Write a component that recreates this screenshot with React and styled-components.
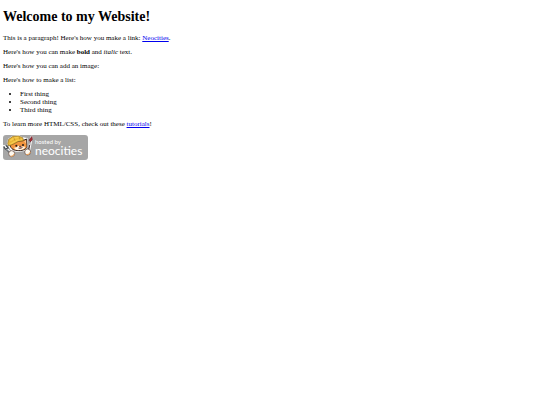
import styled, { createGlobalStyle } from 'styled-components';

const GlobalStyle = createGlobalStyle`
  body {
    margin: 0;
    background: #ffffff;
    color: #000000;
    font-family: 'Liberation Serif', 'Times New Roman', serif;
    font-size: 7px;
    line-height: 8px;
  }
`;

const Page = styled.main`
  padding: 9px 3px;
`;

const Title = styled.h1`
  margin: 0 0 9px;
  font-size: 14px;
  line-height: 16px;
  font-weight: 700;
`;

const Paragraph = styled.p`
  margin: 0 0 6px;
`;

const List = styled.ul`
  margin: 0 0 6px;
  padding-left: 17px;
`;

const TextLink = styled.a`
  color: #0000ee;
  text-decoration: underline;
`;

const Badge = styled.a`
  display: inline-flex;
  align-items: center;
  height: 25px;
  margin-top: 1px;
  padding-right: 6px;
  border-radius: 3px;
  background: #a6a6a6;
  color: #ffffff;
  font-family: Lato, 'Open Sans', sans-serif;
  text-decoration: none;
`;

const Mascot = styled.svg`
  width: 32px;
  height: 25px;
  flex-shrink: 0;
`;

const BadgeText = styled.span`
  display: flex;
  flex-direction: column;
`;

const HostedBy = styled.span`
  font-size: 6px;
  line-height: 7px;
`;

const BrandName = styled.span`
  font-size: 12px;
  line-height: 12px;
`;

const PenelopeCat = () => (
  <Mascot viewBox="0 0 96 75" aria-hidden="true">
    {/* light edge around the whole figure */}
    <g fill="#ffffff" stroke="#ffffff" strokeWidth="4" strokeLinejoin="round" strokeLinecap="round">
      <path d="M14 27 L17 13 L30 4 L47 2 L59 9 L72 11 L74 34 L64 46 L44 49 L25 45 Z" />
      <path d="M3 33 L12 42 L22 53 M86 6 L78 46" fill="none" strokeWidth="7" />
    </g>

    {/* head */}
    <path
      d="M20 28 L19 24 L29 20 L59 17 L71 12 L72 31 C74 42 61 47 47 47 C34 47 24 44 20 28 Z"
      fill="#f2953f"
      stroke="#342622"
      strokeWidth="3"
      strokeLinejoin="round"
    />
    <path d="M46 32 L53 34 L67 35 C65 42 57 45 47 45 C39 45 35 42 33 38 L41 37 Z" fill="#fff7e8" />
    <path d="M64 19 L68 16 L68 26 Z" fill="#ffd2a6" />
    <circle cx="40" cy="32" r="3" fill="#201a19" />
    <circle cx="60" cy="30" r="3" fill="#201a19" />
    <path d="M48 34 L55 33 L52 37 Z M46 39 Q53 43 59 37" fill="#6a352b" stroke="#6b3529" strokeWidth="1.5" />

    {/* hard hat */}
    <path
      d="M14 26 L17 13 L30 4 L47 3 L59 8 L62 17 L47 19 L30 28 L17 33 Z"
      fill="#e9b737"
      stroke="#87651d"
      strokeWidth="2"
      strokeLinejoin="round"
    />
    <path d="M22 17 L34 9 L47 7 M22 27 L41 16 L58 13" fill="none" stroke="#f8cd50" strokeWidth="4" />
    <path d="M32 7 L36 17 M48 5 L51 14" stroke="#b58925" strokeWidth="2" />

    {/* fork */}
    <path d="M2 34 L7 42 L15 39 L10 31 M9 42 L23 56" fill="none" stroke="#464b50" strokeWidth="4" />
    <path d="M8 41 L22 54" fill="none" stroke="#b5bdc5" strokeWidth="1.5" />

    {/* brush */}
    <path d="M82 19 L76 48" stroke="#4c393b" strokeWidth="4" />
    <path d="M87 4 L88 14 L83 20 L78 16 Z" fill="#a92932" stroke="#65262e" strokeWidth="2" />
    <path d="M82 22 L80 30" stroke="#dedede" strokeWidth="4" />

    {/* paws */}
    <g fill="#fffaf1" stroke="#5c4034" strokeWidth="2">
      <circle cx="26" cy="56" r="9" />
      <circle cx="74" cy="51" r="9" />
    </g>
    <path d="M23 64 Q32 65 34 56 M70 59 Q80 60 82 51" fill="none" stroke="#eda35a" strokeWidth="3" />
  </Mascot>
);

const App = () => {
  return (
    <>
      <GlobalStyle />
      <Page>
        <Title>Welcome to my Website!</Title>
        <Paragraph>
          This is a paragraph! Here's how you make a link:{' '}
          <TextLink href="https://neocities.org">Neocities</TextLink>.
        </Paragraph>
        <Paragraph>
          Here's how you can make <strong>bold</strong> and <em>italic</em> text.
        </Paragraph>
        <Paragraph>Here's how you can add an image:</Paragraph>
        <Paragraph>Here's how to make a list:</Paragraph>
        <List>
          <li>First thing</li>
          <li>Second thing</li>
          <li>Third thing</li>
        </List>
        <Paragraph>
          To learn more HTML/CSS, check out these{' '}
          <TextLink href="https://neocities.org/tutorials">tutorials</TextLink>!
        </Paragraph>
        <Badge href="https://neocities.org">
          <PenelopeCat />
          <BadgeText>
            <HostedBy>hosted by</HostedBy>
            <BrandName>neocities</BrandName>
          </BadgeText>
        </Badge>
      </Page>
    </>
  );
};

export default App;
